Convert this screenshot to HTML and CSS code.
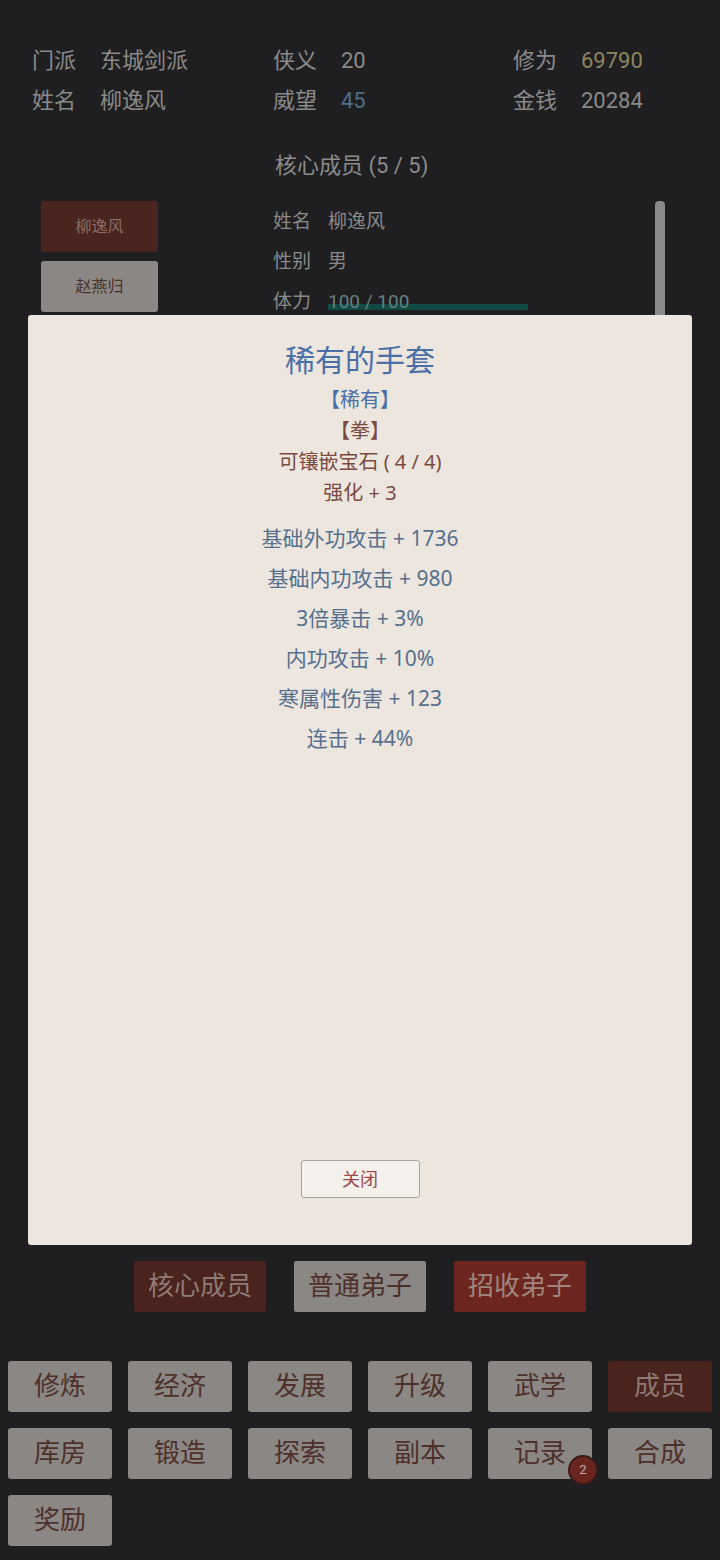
FILE: index.html
```html
<!DOCTYPE html>
<html lang="zh">
<head>
<meta charset="utf-8">
<link rel="stylesheet" href="styles.css">
</head>
<body>
<div class="page">
  <div class="stats">
    <div class="stat"><span class="lbl">门派</span><span class="val">东城剑派</span></div>
    <div class="stat"><span class="lbl">侠义</span><span class="val">20</span></div>
    <div class="stat"><span class="lbl">修为</span><span class="val olive">69790</span></div>
    <div class="stat"><span class="lbl">姓名</span><span class="val">柳逸风</span></div>
    <div class="stat"><span class="lbl">威望</span><span class="val blue">45</span></div>
    <div class="stat"><span class="lbl">金钱</span><span class="val">20284</span></div>
  </div>

  <div class="section-title">核心成员 (5 / 5)</div>

  <div class="members">
    <div class="member-list">
      <div class="mbtn active">柳逸风</div>
      <div class="mbtn">赵燕归</div>
    </div>
    <div class="details">
      <div class="drow"><span class="dlbl">姓名</span><span class="dval">柳逸风</span></div>
      <div class="drow"><span class="dlbl">性别</span><span class="dval">男</span></div>
      <div class="drow"><span class="dlbl">体力</span><span class="dval barval"><span class="bar"></span><span class="bartext">100 / 100</span></span></div>
    </div>
    <div class="scrollbar"></div>

    <div class="modal">
      <div class="m-title">稀有的手套</div>
      <div class="m-line blue">【稀有】</div>
      <div class="m-line brown">【拳】</div>
      <div class="m-line brown">可镶嵌宝石 ( 4 / 4)</div>
      <div class="m-line brown">强化 + 3</div>
      <div class="m-stats">
        <div class="m-stat">基础外功攻击 + 1736</div>
        <div class="m-stat">基础内功攻击 + 980</div>
        <div class="m-stat">3倍暴击 + 3%</div>
        <div class="m-stat">内功攻击 + 10%</div>
        <div class="m-stat">寒属性伤害 + 123</div>
        <div class="m-stat">连击 + 44%</div>
      </div>
      <div class="m-foot"><div class="close-btn">关闭</div></div>
    </div>
  </div>

  <div class="tabs">
    <div class="tab dark">核心成员</div>
    <div class="tab grey">普通弟子</div>
    <div class="tab red">招收弟子</div>
  </div>

  <div class="nav">
    <div class="nbtn">修炼</div>
    <div class="nbtn">经济</div>
    <div class="nbtn">发展</div>
    <div class="nbtn">升级</div>
    <div class="nbtn">武学</div>
    <div class="nbtn active">成员</div>
    <div class="nbtn">库房</div>
    <div class="nbtn">锻造</div>
    <div class="nbtn">探索</div>
    <div class="nbtn">副本</div>
    <div class="nbtn badge-host">记录<span class="badge">2</span></div>
    <div class="nbtn">合成</div>
    <div class="nbtn">奖励</div>
  </div>
</div>
</body>
</html>
```

FILE: styles.css
```css
html, body {
  margin: 0;
  padding: 0;
  background: #1f1f21;
}
body {
  width: 720px;
  height: 1560px;
  overflow: hidden;
  font-family: Roboto, "Noto Sans CJK SC", sans-serif;
  color: #8a8a8a;
}
.page {
  display: flex;
  flex-direction: column;
}
.stats {
  padding-top: 41px;
  display: grid;
  grid-template-columns: 241px 240px 1fr;
  padding-left: 32px;
}
.stat {
  height: 40px;
  line-height: 40px;
  font-size: 22px;
  display: flex;
  white-space: nowrap;
}
.lbl {
  width: 68px;
  color: #8a8a8a;
}
.val { color: #8c8a87; }
.val.olive { color: #8d8660; }
.val.blue { color: #4f6e89; }

.section-title {
  margin-top: 25px;
  height: 40px;
  line-height: 40px;
  font-size: 22px;
  padding-left: 275px;
  color: #8c8c8c;
}

.members {
  position: relative;
  margin-top: 15px;
  height: 1045px;
  display: flex;
  align-items: flex-start;
}
.member-list {
  margin-left: 41px;
  width: 117px;
  display: flex;
  flex-direction: column;
  gap: 9px;
}
.mbtn {
  height: 51px;
  line-height: 51px;
  text-align: center;
  font-size: 16px;
  border-radius: 3px;
  background: #8a8784;
  color: #4e302b;
}
.mbtn.active {
  background: #4a241e;
  color: #8a6c66;
}
.details {
  margin-left: 115px;
  flex: 1;
  margin-top: 1px;
}
.drow {
  height: 40px;
  line-height: 40px;
  font-size: 19px;
  display: flex;
  color: #8a8a8a;
}
.dlbl { width: 55px; }
.barval {
  position: relative;
  width: 200px;
}
.bar {
  position: absolute;
  left: 0;
  right: 0;
  top: 22px;
  height: 6px;
  background: #0f4a45;
}
.bartext {
  position: relative;
  color: #66807f;
}
.scrollbar {
  width: 10px;
  height: 140px;
  margin-right: 55px;
  border-radius: 4px;
  background: #898989;
}

.modal {
  position: absolute;
  left: 28px;
  top: 114px;
  width: 664px;
  height: 930px;
  background: #ece6df;
  border-radius: 3px;
  display: flex;
  flex-direction: column;
  align-items: center;
  padding-top: 25px;
  box-sizing: border-box;
  font-family: "Noto Sans", "Noto Sans CJK SC", sans-serif;
}
.m-title {
  font-size: 30px;
  line-height: 40px;
  color: #4a6ea6;
  margin-bottom: 3px;
}
.m-line {
  font-size: 20px;
  line-height: 31px;
  position: relative;
  top: 1px;
}
.m-line.blue { color: #4a6ea6; }
.m-line.brown { color: #7a4a3f; }
.m-stats {
  margin-top: 11px;
  display: flex;
  flex-direction: column;
  align-items: center;
}
.m-stat {
  font-size: 21px;
  line-height: 40px;
  color: #56708e;
}
.m-foot {
  margin-top: auto;
  padding-bottom: 47px;
}
.close-btn {
  width: 117px;
  height: 36px;
  line-height: 36px;
  text-align: center;
  font-size: 18px;
  color: #9a4848;
  background: #f4f0ec;
  border: 1px solid #a9a39d;
  border-radius: 3px;
}

.tabs {
  margin-top: 15px;
  display: flex;
  justify-content: center;
  gap: 28px;
}
.tab {
  width: 132px;
  height: 51px;
  line-height: 51px;
  text-align: center;
  font-size: 26px;
  border-radius: 2px;
}
.tab.dark { background: #4a231e; color: #8f7a75; }
.tab.grey { background: #8a8784; color: #4e302b; }
.tab.red { background: #6c251f; color: #a0857f; }

.nav {
  margin-top: 49px;
  padding: 0 8px;
  display: grid;
  grid-template-columns: repeat(6, 104px);
  column-gap: 16px;
  row-gap: 16px;
}
.nbtn {
  height: 51px;
  line-height: 51px;
  text-align: center;
  font-size: 26px;
  border-radius: 3px;
  background: #8a8784;
  color: #4e302b;
}
.nbtn.active {
  background: #4a231e;
  color: #8f7a75;
}
.badge-host { position: relative; }
.badge {
  position: absolute;
  left: 80px;
  top: 27px;
  width: 26px;
  height: 26px;
  border-radius: 50%;
  background: #6b2520;
  border: 2px solid #3a1a18;
  color: #c4aca6;
  font-size: 13px;
  line-height: 26px;
  text-align: center;
  font-family: Roboto, sans-serif;
}
```
